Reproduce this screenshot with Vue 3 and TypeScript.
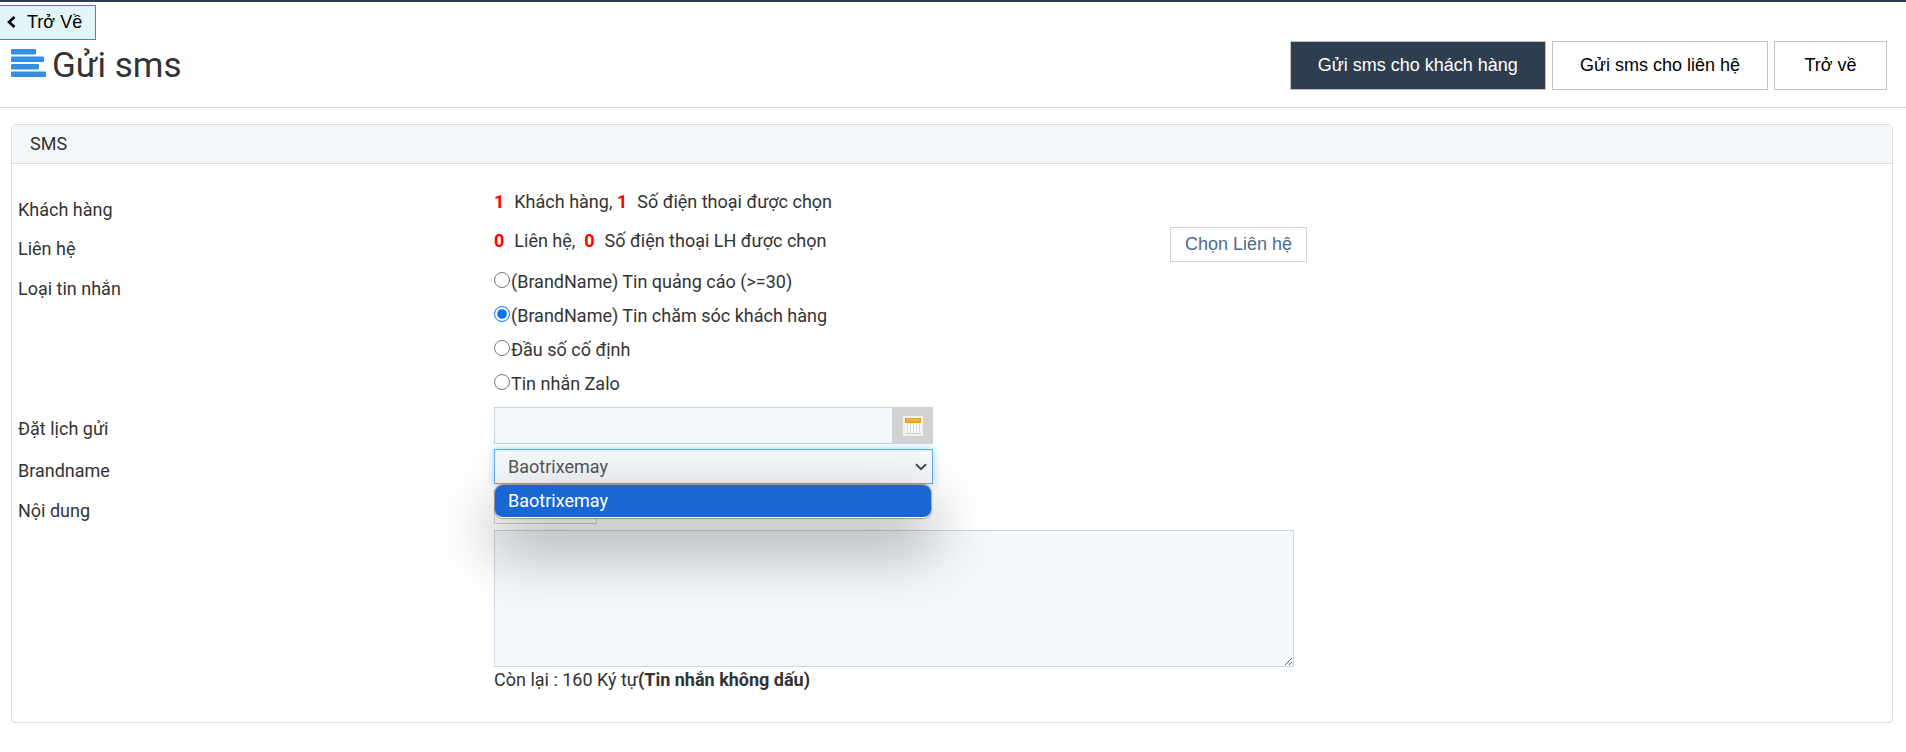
<script setup lang="ts">
import { ref } from 'vue'

interface MessageType {
  value: string
  label: string
}

const messageTypes: MessageType[] = [
  { value: 'ads', label: '(BrandName) Tin quảng cáo (>=30)' },
  { value: 'care', label: '(BrandName) Tin chăm sóc khách hàng' },
  { value: 'fixed', label: 'Đầu số cố định' },
  { value: 'zalo', label: 'Tin nhắn Zalo' },
]

const brands: string[] = ['Baotrixemay']

const messageType = ref('care')
const schedule = ref('')
const brand = ref(brands[0])
const template = ref('')
const content = ref('')
const brandListOpen = ref(true)

function pickBrand(name: string) {
  brand.value = name
  brandListOpen.value = false
}
</script>

<template>
  <div class="page">
    <div class="topbar"></div>
    <a class="back" href="#">
      <svg width="9" height="12" viewBox="0 0 9 12" aria-hidden="true">
        <path d="M7.5 1 L2 6 L7.5 11" fill="none" stroke="#000" stroke-width="2.6" />
      </svg>
      <span>Trở Về</span>
    </a>

    <header class="heading">
      <h1>
        <svg width="35" height="28" viewBox="0 0 35 28" aria-hidden="true">
          <g fill="#368ee0">
            <rect x="0" y="0" width="25" height="5.5" rx="1" />
            <rect x="0" y="7.5" width="33" height="5.5" rx="1" />
            <rect x="0" y="15" width="28" height="5.5" rx="1" />
            <rect x="0" y="22.5" width="35" height="5.5" rx="1" />
          </g>
        </svg>
        <span>Gửi sms</span>
      </h1>
      <nav class="actions">
        <button type="button" class="action primary">Gửi sms cho khách hàng</button>
        <button type="button" class="action">Gửi sms cho liên hệ</button>
        <button type="button" class="action">Trở về</button>
      </nav>
    </header>

    <section class="panel">
      <h2>SMS</h2>
      <form class="form" @submit.prevent>
        <div class="row customers">
          <span class="name">Khách hàng</span>
          <div class="value">
            <span class="summary"><b>1</b>Khách hàng, <b>1</b>Số điện thoại được chọn</span>
          </div>
        </div>

        <div class="row contacts">
          <span class="name">Liên hệ</span>
          <div class="value">
            <span class="summary"><b>0</b>Liên hệ,&nbsp; <b>0</b>Số điện thoại LH được chọn</span>
            <button type="button" class="choose">Chọn Liên hệ</button>
          </div>
        </div>

        <div class="row types" role="radiogroup" aria-labelledby="type-name">
          <span id="type-name" class="name">Loại tin nhắn</span>
          <div class="value stack">
            <label v-for="t in messageTypes" :key="t.value" class="radio">
              <input v-model="messageType" type="radio" name="type" :value="t.value" />
              <span>{{ t.label }}</span>
            </label>
          </div>
        </div>

        <div class="row schedule">
          <label class="name" for="schedule">Đặt lịch gửi</label>
          <div class="value">
            <div class="date">
              <input id="schedule" v-model="schedule" type="text" />
              <button type="button" aria-label="Chọn ngày">
                <svg width="22" height="22" viewBox="0 0 22 22" aria-hidden="true">
                  <rect x="0.5" y="0.5" width="21" height="21" rx="1.5" fill="#f3f1ee" stroke="#dcd3c4" />
                  <rect x="3" y="3" width="16" height="5" fill="#eca51f" />
                  <rect x="5" y="4" width="12" height="2" fill="#f0b64a" />
                  <rect x="4" y="8" width="15" height="10" fill="#fdfdfb" />
                  <path d="M5.5 8v10M8.5 8v10M11.5 8v10M14.5 8v10M17.5 8v10" stroke="#d8d8d4" />
                  <path d="M4 18.500h15" stroke="#cfcfd2" />
                </svg>
              </button>
            </div>
          </div>
        </div>

        <div class="row brand">
          <label class="name" for="brand">Brandname</label>
          <div class="value">
            <div class="picker">
              <select id="brand" v-model="brand" @mousedown.prevent="brandListOpen = !brandListOpen">
                <option v-for="b in brands" :key="b" :value="b">{{ b }}</option>
              </select>
              <svg class="chevron" width="12" height="8" viewBox="0 0 12 8" aria-hidden="true">
                <path d="M1 1.200 L6 6.200 L11 1.200" fill="none" stroke="#4a4a4a" stroke-width="2" />
              </svg>
              <div v-if="brandListOpen" class="options" role="listbox" aria-label="Brandname">
                <button
                  v-for="b in brands"
                  :key="b"
                  type="button"
                  role="option"
                  :aria-selected="b === brand"
                  @click="pickBrand(b)"
                >
                  {{ b }}
                </button>
              </div>
            </div>
          </div>
        </div>

        <div class="row message">
          <label class="name" for="content">Nội dung</label>
          <div class="value stack">
            <input v-model="template" class="template" type="text" aria-label="Mẫu tin" />
            <textarea id="content" v-model="content"></textarea>
            <p>Còn lại : {{ 160 - content.length }} Ký tự<strong>(Tin nhắn không dấu)</strong></p>
          </div>
        </div>
      </form>
    </section>
  </div>
</template>

<style>
body {
  background: #fff;
}
</style>

<style scoped>
.page,
.page * {
  box-sizing: border-box;
}
.page {
  font-family: Roboto, 'Noto Sans', sans-serif;
  font-size: 18px;
  line-height: 24px;
  color: #333;
}
button,
input,
select,
textarea {
  font: inherit;
  margin: 0;
}
.topbar {
  height: 2px;
  margin-bottom: 3px;
  background: #2c3e50;
}
.back {
  display: flex;
  align-items: center;
  gap: 11px;
  width: 96px;
  height: 35px;
  padding: 0 0 2px 7px;
  border: 1px solid #179fb5;
  border-left: 0;
  background: #e3f4f8;
  color: #000;
  font-family: 'Liberation Sans', Arial, sans-serif;
  font-size: 18px;
  text-decoration: none;
}
.heading {
  display: flex;
  justify-content: space-between;
  align-items: flex-start;
  height: 68px;
  padding: 0 19px 0 11px;
  border-bottom: 1px solid #cbd5dd;
}
h1 {
  display: flex;
  align-items: flex-start;
  gap: 6px;
  margin: 6px 0 0;
  font-size: 35px;
  line-height: 40px;
  font-weight: 400;
}
h1 svg {
  margin-top: 3px;
}
.actions {
  display: flex;
  gap: 6px;
  margin-top: 1px;
}
.action {
  min-width: 113px;
  height: 49px;
  padding: 0 27px 2px;
  border: 1px solid #bfc1c3;
  background: #fff;
  color: #000;
  font-family: 'Liberation Sans', Arial, sans-serif;
  font-size: 18px;
}
.primary {
  background: #2e3e4e;
  color: #fff;
}
.panel {
  margin: 16px 13px 0 11px;
  border: 1px solid #dbdde0;
  border-radius: 5px;
  box-shadow: 0 1px 1px rgba(0, 0, 0, 0.05);
}
h2 {
  margin: 0;
  padding: 7px 18px;
  border-bottom: 1px solid #dbdde0;
  border-radius: 4px 4px 0 0;
  background: #f4f7fa;
  font-size: 18px;
  line-height: 24px;
  font-weight: 400;
}
.form {
  padding: 24px 0 30px;
}
.row {
  display: grid;
  grid-template-columns: 1fr 3fr;
}
.name {
  padding: 10px 6px 0;
}
.value {
  display: flex;
  align-items: flex-start;
  padding-left: 12px;
}
.stack {
  flex-direction: column;
}
.summary {
  width: 676px;
  padding-top: 2px;
}
.summary b {
  margin-right: 10px;
  color: #f00;
}
.customers {
  height: 39px;
}
.contacts {
  height: 37px;
}
.choose {
  height: 35px;
  padding: 0 14px 2px;
  border: 1px solid #ccd5e2;
  background: #fff;
  color: #4d6a8f;
  font-family: 'Liberation Sans', Arial, sans-serif;
}
.types .name {
  padding-top: 13px;
}
.types .value {
  padding-top: 1px;
}
.radio {
  display: flex;
  align-items: center;
  gap: 1px;
  height: 34px;
}
.radio input {
  width: 16px;
  height: 16px;
  margin-bottom: 5px;
}
.schedule {
  height: 42px;
  margin-top: 6px;
}
.date {
  display: flex;
  width: 439px;
  height: 37px;
}
.date input {
  flex: 1;
  min-width: 0;
  padding: 0 12px;
  border: 1px solid #c5d3e3;
  background: #f3f8fb;
}
.date button {
  display: grid;
  place-items: center;
  width: 40px;
  padding: 0;
  border: 0;
  background: #d2d2d2;
}
.brand {
  height: 40px;
}
.picker {
  position: relative;
  width: 439px;
}
.picker select {
  display: block;
  width: 100%;
  height: 35px;
  padding: 0 13px;
  appearance: none;
  border: 1px solid #66afe9;
  border-radius: 0;
  background: #f3f8fb;
  box-shadow: inset 0 1px 1px rgba(0, 0, 0, 0.075), 0 0 8px rgba(102, 175, 233, 0.6);
  color: #555;
}
.chevron {
  position: absolute;
  top: 14px;
  right: 6px;
  pointer-events: none;
}
.options {
  position: absolute;
  z-index: 2;
  top: 36px;
  left: 1px;
  right: 2px;
  overflow: hidden;
  border-bottom: 1px solid #fff;
  border-radius: 8px;
  background: #fff;
  box-shadow: 0 0 1px 1px rgba(60, 60, 60, 0.4), 0 26px 60px 4px rgba(0, 0, 0, 0.36);
}
.options button {
  display: block;
  width: 100%;
  height: 32px;
  padding: 0 13px;
  border: 0;
  background: #1967d2;
  color: #fff;
  text-align: left;
}
.template {
  width: 103px;
  height: 35px;
  margin-bottom: 6px;
  border: 1px solid #ccd5e2;
  background: #fff;
}
textarea {
  width: 800px;
  max-width: 100%;
  height: 137px;
  padding: 6px 12px;
  border: 1px solid #c9d5e0;
  background: #f3f8fb;
  resize: both;
}
p {
  margin: 1px 0 0;
}
</style>
